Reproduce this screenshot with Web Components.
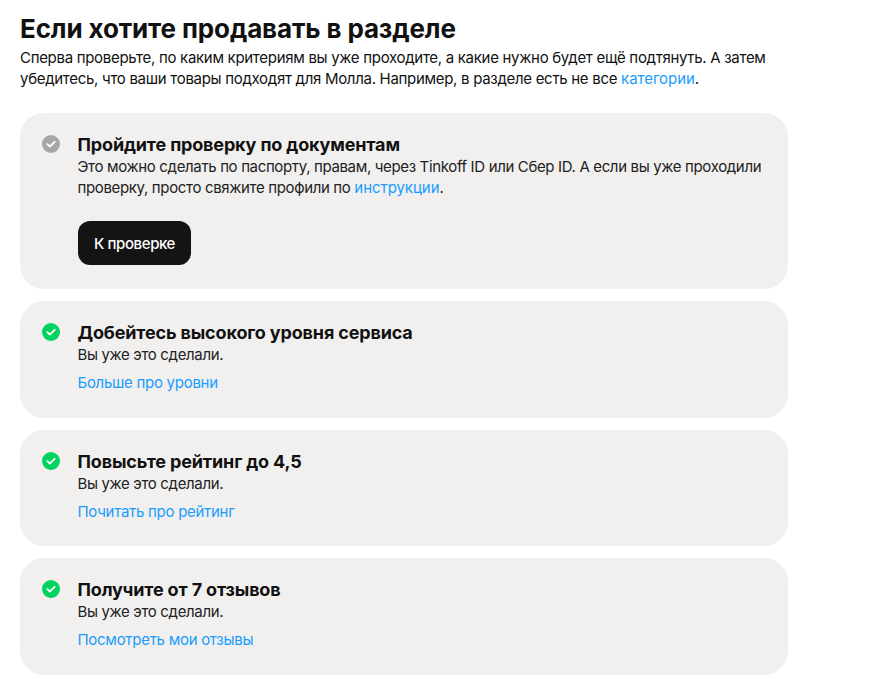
<!DOCTYPE html>
<html lang="ru">
<head>
<meta charset="utf-8">
<title>Если хотите продавать в разделе</title>
<style>
  body { margin: 0; background: #fff; font-family: Inter, "Noto Sans", sans-serif; color: #111; }
</style>
</head>
<body>
<sell-page>
  <span slot="title">Если хотите продавать в разделе</span>
  <span slot="intro">Сперва проверьте, по каким критериям вы уже проходите, а какие нужно будет ещё подтянуть. А затем убедитесь, что ваши товары подходят для Молла. Например, в разделе есть не все <a-link>категории</a-link>.</span>
  <step-card state="pending" heading="Пройдите проверку по документам">
    Это можно сделать по паспорту, правам, через Tinkoff ID или Сбер ID. А если вы уже проходили проверку, просто свяжите профили по <a-link>инструкции</a-link>.
    <black-button slot="action">К проверке</black-button>
  </step-card>
  <step-card state="done" heading="Добейтесь высокого уровня сервиса">
    Вы уже это сделали.
    <a-link slot="more">Больше про уровни</a-link>
  </step-card>
  <step-card state="done" heading="Повысьте рейтинг до 4,5">
    Вы уже это сделали.
    <a-link slot="more">Почитать про рейтинг</a-link>
  </step-card>
  <step-card state="done" heading="Получите от 7 отзывов">
    Вы уже это сделали.
    <a-link slot="more">Посмотреть мои отзывы</a-link>
  </step-card>
</sell-page>

<script>
class SellPage extends HTMLElement {
  connectedCallback() {
    const shadow = this.attachShadow({ mode: 'open' });
    shadow.innerHTML = `
      <style>
        :host { display: block; width: 768px; padding: 14px 0 0 20px; }
        h1 { margin: 0; font-size: 26px; line-height: 30px; font-weight: 700; letter-spacing: -0.13px; color: #111; }
        p { margin: 3px 0 24px; font-size: 15px; line-height: 21px; letter-spacing: -0.3px; color: #111; }
        .list { display: flex; flex-direction: column; gap: 12px; }
      </style>
      <h1><slot name="title"></slot></h1>
      <p><slot name="intro"></slot></p>
      <div class="list"><slot></slot></div>`;
  }
}
customElements.define('sell-page', SellPage);

class StepCard extends HTMLElement {
  connectedCallback() {
    const shadow = this.attachShadow({ mode: 'open' });
    const color = this.getAttribute('state') === 'done' ? '#00d35f' : '#a6a6a6';
    shadow.innerHTML = `
      <style>
        :host { display: grid; grid-template-columns: 18px 1fr; column-gap: 17.5px; padding: 21px 22px 24.5px; background: #f1f0ef; border-radius: 24px; }
        svg { width: 18px; height: 18px; margin-top: 1px; display: block; }
        h2 { margin: 0; font-size: 18px; line-height: 22px; font-weight: 700; letter-spacing: -0.15px; color: #111; }
        .text { font-size: 15px; line-height: 21px; letter-spacing: -0.35px; color: #222; }
        ::slotted([slot="action"]) { margin: 23px 0 -0.5px 0.5px; }
      </style>
      <svg viewBox="0 0 18 18"><circle cx="9" cy="9" r="9" fill="${color}"/><path d="M5.3 9.2 7.9 11.5 12.7 6.8" fill="none" stroke="#fff" stroke-width="1.8" stroke-linecap="round" stroke-linejoin="round"/></svg>
      <div>
        <h2>${this.getAttribute('heading')}</h2>
        <div class="text"><slot></slot></div>
        <slot name="more"></slot>
        <slot name="action"></slot>
      </div>`;
  }
}
customElements.define('step-card', StepCard);

class ALink extends HTMLElement {
  connectedCallback() {
    const shadow = this.attachShadow({ mode: 'open' });
    shadow.innerHTML = `
      <style>
        :host { color: #1a9cff; cursor: pointer; letter-spacing: -0.05px; }
        :host([slot="more"]) { display: block; margin-top: 7px; font-size: 15px; line-height: 21px; letter-spacing: -0.28px; }
      </style>
      <slot></slot>`;
  }
}
customElements.define('a-link', ALink);

class BlackButton extends HTMLElement {
  connectedCallback() {
    const shadow = this.attachShadow({ mode: 'open' });
    shadow.innerHTML = `
      <style>
        :host { display: flex; width: fit-content; align-items: center; height: 44px; padding: 0 16px; background: #141414; color: #fff; border-radius: 12px; font-size: 15px; font-weight: 500; letter-spacing: -0.4px; cursor: pointer; }
      </style>
      <slot></slot>`;
  }
}
customElements.define('black-button', BlackButton);
</script>
</body>
</html>
